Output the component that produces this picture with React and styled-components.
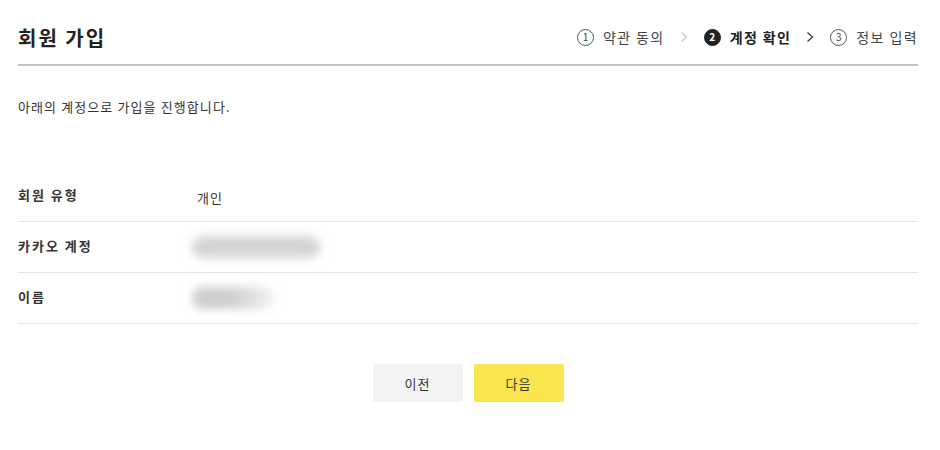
import styled, { createGlobalStyle } from "styled-components";

const GlobalStyle = createGlobalStyle`
  body {
    margin: 0;
    background: #fff;
    font-family: "Noto Sans CJK KR", "Noto Sans", sans-serif;
    color: #333;
  }
`;

const Wrap = styled.div`
  width: 900px;
  margin-left: 18px;
`;

const Header = styled.div`
  height: 66px;
  padding-top: 10px;
  box-sizing: border-box;
  display: flex;
  align-items: center;
  justify-content: space-between;
  border-bottom: 2px solid #c6c6c6;
`;

const Title = styled.h1`
  margin: 0;
  font-size: 20px;
  font-weight: 700;
  color: #222;
  letter-spacing: 2px;
`;

const Steps = styled.ol`
  display: flex;
  align-items: center;
  list-style: none;
  margin: 0;
  padding: 0;
`;

const Step = styled.li`
  display: flex;
  align-items: center;
  gap: 9px;
  font-size: 14px;
  font-weight: ${(p) => (p.$active ? 700 : 400)};
  color: ${(p) => (p.$active ? "#222" : "#444")};
  letter-spacing: 1.4px;
`;

const Num = styled.span`
  width: 17px;
  height: 17px;
  border-radius: 50%;
  box-sizing: border-box;
  border: 1px solid ${(p) => (p.$active ? "#222" : "#555")};
  background: ${(p) => (p.$active ? "#222" : "#fff")};
  color: ${(p) => (p.$active ? "#fff" : "#444")};
  font-size: 10px;
  font-weight: ${(p) => (p.$active ? 700 : 400)};
  letter-spacing: 0;
  display: flex;
  align-items: center;
  justify-content: center;
  line-height: 1;
`;

const Chevron = styled.svg`
  margin: 0 16px 0 15px;
  width: 8px;
  height: 12px;
  stroke: ${(p) => (p.$dark ? "#444" : "#ccc")};
`;

const Intro = styled.p`
  margin: 32px 0 0;
  font-size: 13px;
  line-height: 18px;
  color: #333;
  letter-spacing: 1.1px;
`;

const Table = styled.dl`
  margin: 55px 0 0;
`;

const Row = styled.div`
  display: flex;
  align-items: center;
  height: 50px;
  border-bottom: 1px solid #e5e5e5;
`;

const Label = styled.dt`
  width: 179px;
  padding-bottom: 3px;
  font-size: 13px;
  font-weight: 700;
  color: #333;
  letter-spacing: 2px;
`;

const Value = styled.dd`
  margin: 0;
  font-size: 13px;
  color: #333;
  letter-spacing: 1px;
  padding-top: ${(p) => (p.$shift ? "2px" : "0")};
`;

const Blur = styled.div`
  width: ${(p) => p.$w}px;
  height: 22px;
  margin-left: -5px;
  border-radius: 11px;
  background: ${(p) => p.$bg};
  filter: blur(5px);
`;

const Buttons = styled.div`
  display: flex;
  justify-content: center;
  gap: 11px;
  margin-top: 40px;
`;

const Button = styled.button`
  width: 90px;
  height: 38px;
  border: 0;
  border-radius: 2px;
  font-family: inherit;
  font-size: 13px;
  letter-spacing: 1px;
  color: #333;
  background: ${(p) => (p.$primary ? "#fae54f" : "#f3f3f3")};
  cursor: pointer;
`;

function Arrow({ dark }) {
  return (
    <Chevron $dark={dark} viewBox="0 0 8 12" fill="none" strokeWidth="1.4">
      <path d="M1.5 1.5 L6.5 6 L1.5 10.5" />
    </Chevron>
  );
}

export default function App() {
  return (
    <>
      <GlobalStyle />
      <Wrap>
        <Header>
          <Title>회원 가입</Title>
          <Steps>
            <Step>
              <Num>1</Num>약관 동의
            </Step>
            <Arrow />
            <Step $active>
              <Num $active>2</Num>계정 확인
            </Step>
            <Arrow dark />
            <Step>
              <Num>3</Num>정보 입력
            </Step>
          </Steps>
        </Header>
        <Intro>아래의 계정으로 가입을 진행합니다.</Intro>
        <Table>
          <Row>
            <Label>회원 유형</Label>
            <Value $shift>개인</Value>
          </Row>
          <Row>
            <Label>카카오 계정</Label>
            <Value>
              <Blur $w={128} $bg="#d4d4d4" />
            </Value>
          </Row>
          <Row>
            <Label>이름</Label>
            <Value>
              <Blur $w={82} $bg="linear-gradient(90deg, #cdcdcd 0%, #cfcfcf 50%, #f2f2f2 100%)" />
            </Value>
          </Row>
        </Table>
        <Buttons>
          <Button>이전</Button>
          <Button $primary>다음</Button>
        </Buttons>
      </Wrap>
    </>
  );
}
